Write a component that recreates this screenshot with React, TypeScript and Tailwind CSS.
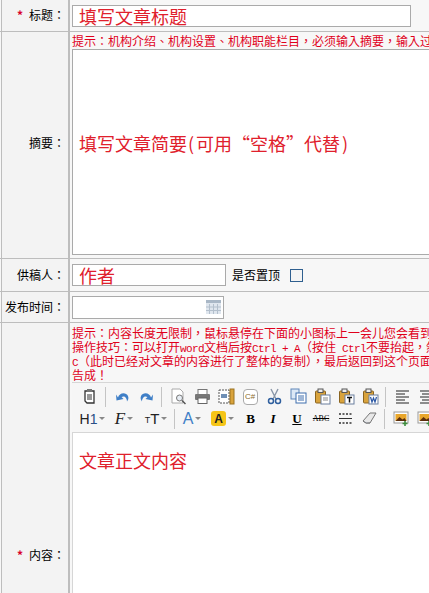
import type { ReactNode } from 'react'

const SC = { fontFamily: '"Noto Sans CJK SC", "Liberation Sans", sans-serif' }
const TC = { fontFamily: '"Noto Sans CJK TC", "Liberation Sans", sans-serif' }

// 左侧标签列
function Label({ children, required, className = 'items-center' }: { children: ReactNode; required?: boolean; className?: string }) {
  return (
    <div
      style={TC}
      className={`w-[69px] ml-px shrink-0 bg-[#f3f3f3] border-l border-r-2 border-l-[#bdbdbd] border-r-[#bdbdbd] flex justify-end pr-[3px] text-[12px] leading-[14px] whitespace-nowrap text-black ${className}`}
    >
      {required && <span className="text-[#d8002a] mr-[6px] font-bold">*</span>}
      <span>{children}</span>
    </div>
  )
}

function Sep() {
  return <div className="w-px h-[20px] bg-[#c4c4c4] ml-[3px] mr-[4px] shrink-0" />
}

function Tool({ children, w = 'w-6' }: { children: ReactNode; w?: string }) {
  return <div className={`${w} h-[20px] shrink-0 flex items-center justify-center`}>{children}</div>
}

function Icon({ children }: { children: ReactNode }) {
  return (
    <svg width="17" height="17" viewBox="0 0 17 17" fill="none">
      {children}
    </svg>
  )
}

function Caret() {
  return <span className="ml-[2px] w-0 h-0 border-x-[3px] border-x-transparent border-t-[3px] border-t-[#888]" />
}

function Mono({ children }: { children: ReactNode }) {
  return <span className="text-[11px] tracking-[-0.6px] font-['Liberation_Mono']">{children}</span>
}

function PasteIcon({ badge }: { badge?: ReactNode }) {
  return (
    <Icon>
      <rect x="1.500" y="3" width="10" height="12" rx="1" fill="#d9a33c" stroke="#8a6420" />
      <rect x="4" y="1" width="5" height="3.500" fill="#eee" stroke="#555" />
      <rect x="7" y="7" width="9" height="9" fill="#fff" stroke="#6a7f9e" />
      {badge}
    </Icon>
  )
}

function ImageIcon() {
  return (
    <Icon>
      <rect x="1" y="2" width="14" height="11" fill="#fff" stroke="#999" />
      <rect x="2.500" y="4" width="11" height="7" fill="#e9a62b" />
      <path d="M2.500 11l4-4 3 2.500 2-1.500 2 3z" fill="#5a2d0c" />
      <path d="M12 11v5M9.500 13.500h5" stroke="#3e8e3e" strokeWidth="1.600" />
    </Icon>
  )
}

function Toolbar() {
  return (
    <div className="bg-[#f6f6f6] border-t border-b border-[#d6d6d6] pl-[6px] h-[51px] flex flex-col justify-center gap-[2px] w-[420px] shrink-0">
      <div className="flex items-center">
        <Tool>
          <Icon>
            <path d="M3 3h9v12H5l-2-2z" fill="#fff" stroke="#333" strokeWidth="1.300" />
            <rect x="5" y="1" width="5" height="3" fill="#777" />
            <path d="M5 7h5M5 9h5M5 11h5" stroke="#333" />
          </Icon>
        </Tool>
        <Sep />
        <Tool>
          <Icon>
            <path d="M4 9.500c1-5 8-6 10-1.500 1 2.500 0 4-1 5.500 0-3-2-6.500-5.500-4.500l2 2-7 1.500-.5-6z" fill="#3f7fc7" />
          </Icon>
        </Tool>
        <Tool>
          <Icon>
            <path d="M13 9.500c-1-5-8-6-10-1.500-1 2.500 0 4 1 5.500 0-3 2-6.500 5.500-4.500l-2 2 7 1.500.5-6z" fill="#3f7fc7" />
          </Icon>
        </Tool>
        <Sep />
        <Tool>
          <Icon>
            <path d="M2 1h8l3 3v11H2z" fill="#fff" stroke="#aaa" />
            <circle cx="9.500" cy="10" r="3" fill="#e8eef5" stroke="#777" />
            <path d="M12 12.500l3.500 3.500" stroke="#555" strokeWidth="1.500" />
          </Icon>
        </Tool>
        <Tool>
          <Icon>
            <rect x="4" y="1.500" width="9" height="5" fill="#fff" stroke="#777" />
            <rect x="1" y="6" width="15" height="6" rx="1" fill="#777" />
            <rect x="4" y="10" width="9" height="5.500" fill="#fff" stroke="#666" />
          </Icon>
        </Tool>
        <Tool>
          <Icon>
            <rect x="1" y="2" width="10" height="13" fill="#fff" stroke="#555" strokeDasharray="2 1" />
            <rect x="3" y="6" width="6" height="4" fill="#6f8fb5" />
            <rect x="12" y="1" width="4" height="15" fill="#d9a33c" stroke="#9a7220" />
          </Icon>
        </Tool>
        <Tool>
          <div className="w-[15px] h-[16px] border border-[#aaa] rounded-sm bg-white flex items-center justify-center text-[8px] leading-none text-[#8a6a2a] font-['Liberation_Sans']">
            C#
          </div>
        </Tool>
        <Tool>
          <Icon>
            <path d="M5 1l5 10M12 1L7 11" stroke="#8a97a8" strokeWidth="1.400" />
            <circle cx="5" cy="13" r="2.500" stroke="#2f5f9e" strokeWidth="1.500" />
            <circle cx="12" cy="13" r="2.500" stroke="#2f5f9e" strokeWidth="1.500" />
          </Icon>
        </Tool>
        <Tool>
          <Icon>
            <rect x="1" y="1" width="8" height="10" fill="#dce8f6" stroke="#5f86b8" />
            <rect x="6" y="5" width="10" height="10" fill="#fff" stroke="#3f6fae" />
            <path d="M8 8h6M8 10h6M8 12h6" stroke="#3f6fae" />
          </Icon>
        </Tool>
        <Tool>
          <PasteIcon badge={<path d="M9 10h5M9 12h5" stroke="#888" />} />
        </Tool>
        <Tool>
          <PasteIcon badge={<path d="M9 9.500h5M11.500 9.500v5" stroke="#111" strokeWidth="1.500" />} />
        </Tool>
        <Tool>
          <PasteIcon badge={<path d="M8.500 9l1.500 5 1.500-4 1.500 4 1.500-5" stroke="#2a57a5" strokeWidth="1.200" />} />
        </Tool>
        <Sep />
        <Tool>
          <Icon>
            <path d="M2 3h13M2 6h9M2 9h13M2 12h9M2 15h13" stroke="#222" />
          </Icon>
        </Tool>
        <Tool>
          <Icon>
            <path d="M2 3h13M4 6h9M2 9h13M4 12h9M2 15h13" stroke="#222" />
          </Icon>
        </Tool>
      </div>
      <div className="flex items-center">
        <Tool w="w-[29px]">
          <span className="text-[14px] leading-none text-[#222] font-['Liberation_Sans']">
            H<span className="text-[#2a4f86]">1</span>
          </span>
          <Caret />
        </Tool>
        <Tool w="w-[34px]">
          <span className="text-[17px] leading-none italic text-[#222] font-['Liberation_Serif']">F</span>
          <Caret />
        </Tool>
        <Tool w="w-[30px]">
          <span className="text-[9px] leading-none text-[#222] font-['Liberation_Sans'] self-end mb-1">T</span>
          <span className="text-[15px] leading-none text-[#222] font-['Liberation_Sans']">T</span>
          <Caret />
        </Tool>
        <Sep />
        <Tool w="w-[26px]">
          <span className="text-[16px] leading-none text-[#3f7fc7] font-['Liberation_Sans']">A</span>
          <Caret />
        </Tool>
        <Tool w="w-[35px]">
          <span className="w-[15px] h-[15px] rounded-[3px] bg-[#f5c518] flex items-center justify-center text-[12px] leading-none font-bold text-[#222] font-['Liberation_Sans']">
            A
          </span>
          <Caret />
        </Tool>
        <Tool w="w-[21px]">
          <span className="text-[13px] leading-none font-bold text-black font-['Liberation_Serif']">B</span>
        </Tool>
        <Tool>
          <span className="text-[13px] leading-none font-bold italic text-black font-['Liberation_Serif']">I</span>
        </Tool>
        <Tool>
          <span className="text-[13px] leading-none font-bold underline text-black font-['Liberation_Serif']">U</span>
        </Tool>
        <Tool>
          <span className="text-[8px] leading-none text-black line-through font-['Liberation_Serif']">ABC</span>
        </Tool>
        <Tool>
          <Icon>
            <path d="M2 4h13M2 13h13" stroke="#333" strokeDasharray="2 1.500" strokeWidth="1.300" />
            <path d="M2 8.500h13" stroke="#333" />
          </Icon>
        </Tool>
        <Tool>
          <Icon>
            <path d="M2 11l7-8h6l-6 10H5z" fill="#e8e8e8" stroke="#777" />
            <path d="M2 11l3 2h4" stroke="#777" fill="#cfd8e6" />
          </Icon>
        </Tool>
        <Sep />
        <Tool>
          <ImageIcon />
        </Tool>
        <Tool>
          <ImageIcon />
        </Tool>
      </div>
    </div>
  )
}

export default function App() {
  return (
    <div className="w-[429px] h-[593px] overflow-hidden bg-white flex flex-col" style={SC}>
      {/* 标题 */}
      <div className="h-[32px] shrink-0 flex border-b border-[#bdbdbd] bg-[#f7f7f7]">
        <Label required className="items-center pb-[2px]">标题：</Label>
        <div className="flex-1 flex items-center pl-[2px]">
          <div className="w-[339px] h-[22px] bg-white border border-[#aaa] pl-[6px] text-[18px] leading-[20px] text-[#e0202c]">
            填写文章标题
          </div>
        </div>
      </div>

      {/* 摘要 */}
      <div className="h-[227px] shrink-0 flex border-b border-[#bdbdbd] bg-[#f7f7f7]">
        <Label className="items-center pb-[4px]">摘要：</Label>
        <div className="flex-1 min-w-0 pl-[2px] flex flex-col">
          <div style={TC} className="h-[17px] pt-[2px] text-[12px] leading-[14px] text-[#e0001b] whitespace-nowrap overflow-hidden">
            提示：机构介绍、机构设置、机构职能栏目，必须输入摘要，输入过
          </div>
          <div className="w-[420px] h-[206px] bg-white border border-[#aaa] pl-[6px] pt-[81px] text-[18px] leading-[24px] text-[#e0202c] whitespace-nowrap">
            填写文章简要<span className="ml-px mr-[2px]">(</span>可用“空格”代替<span className="ml-[2px]">)</span>
          </div>
        </div>
      </div>

      {/* 供稿人 */}
      <div className="h-[33px] shrink-0 flex border-b border-[#bdbdbd] bg-[#f7f7f7]">
        <Label>供稿人：</Label>
        <div className="flex-1 flex items-center pl-[2px] text-[12px] text-black">
          <div className="w-[154px] h-[22px] bg-white border border-[#aaa] pl-[6px] text-[18px] leading-[20px] text-[#e0202c]">
            作者
          </div>
          <span className="ml-[6px]">是否置顶</span>
          <span className="ml-[10px] w-[13px] h-[13px] border border-[#2f5f8f] bg-[#f4f4f4]" />
        </div>
      </div>

      {/* 发布时间 */}
      <div className="h-[31px] shrink-0 flex border-b border-[#bdbdbd] bg-[#f7f7f7]">
        <Label>发布时间：</Label>
        <div className="flex-1 flex items-center pl-[2px]">
          <div className="w-[152px] h-[23px] bg-white border border-[#aaa] flex items-center justify-end pr-[2px]">
            <svg width="15" height="14" viewBox="0 0 15 14">
              <rect x="0" y="0" width="15" height="14" fill="#dfe6ee" />
              <rect x="0" y="0" width="15" height="3" fill="#a9b7c6" />
              <path d="M3.500 4v10M7.500 4v10M11.500 4v10M0 7h15M0 10.500h15" stroke="#b3bfcc" />
            </svg>
          </div>
        </div>
      </div>

      {/* 内容 */}
      <div className="flex-1 min-h-0 flex bg-[#f7f7f7]">
        <Label required className="items-end pb-[31px]">内容：</Label>
        <div className="flex-1 min-w-0 pl-[2px] flex flex-col">
          <div style={TC} className="pt-[3px] h-[59px] text-[12px] leading-[14px] text-[#e0001b] whitespace-nowrap overflow-hidden">
            <div className="h-[14px]">提示：内容长度无限制，鼠标悬停在下面的小图标上一会儿您会看到</div>
            <div className="h-[14px]">
              操作技巧：可以打开<Mono>word</Mono>文档后按<Mono>Ctrl + A</Mono>（按住<Mono> Ctrl</Mono>不要抬起，然后按
            </div>
            <div className="h-[14px]">
              <Mono>C</Mono>（此时已经对文章的内容进行了整体的复制），最后返回到这个页面
            </div>
            <div className="h-[14px]">告成！</div>
          </div>
          <Toolbar />
          <div className="flex-1 bg-white border-l border-[#d6d6d6] pl-[6px] pt-[15px] text-[18px] leading-[24px] text-[#e0202c]">
            文章正文内容
          </div>
        </div>
      </div>
    </div>
  )
}
